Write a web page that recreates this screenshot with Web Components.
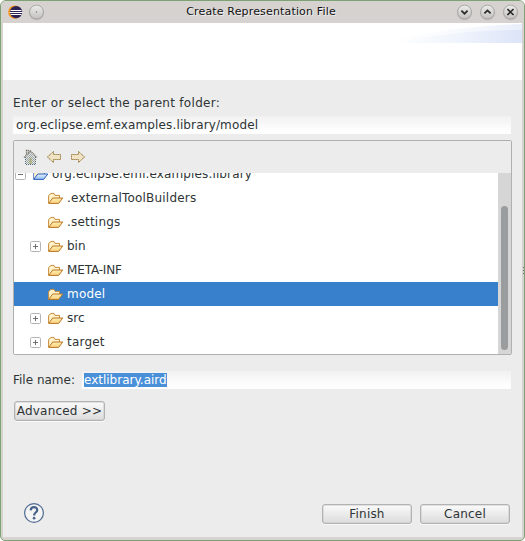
<!DOCTYPE html>
<html lang="en"><head><meta charset="utf-8"><title>Create Representation File</title>
<style>
html,body{margin:0;width:525px;height:541px;overflow:hidden;background:#fff}
body{font:12px/16px "DejaVu Sans",sans-serif;color:#2e3436}
</style></head><body>
<wizard-dialog></wizard-dialog>
<script>
const define=(name,html,setup)=>customElements.define(name,class extends HTMLElement{
  connectedCallback(){
    if(this.shadowRoot)return;
    const t=document.createElement('template');
    t.innerHTML=html;
    this.attachShadow({mode:'open'}).append(t.content.cloneNode(true));
    if(setup)setup(this,this.shadowRoot);
  }
});

define('window-button',`<style>:host{display:block;width:17px;height:17px}svg{display:block}</style>
<svg width="17" height="17" viewBox="0 0 17 17"><defs><linearGradient id="g" x2="0" y2="1"><stop stop-color="#ececea"/><stop offset="1" stop-color="#c3c1be"/></linearGradient></defs>
<circle cx="8.5" cy="8.9" r="7.6" fill="#b3b0ad" opacity=".6"/><circle cx="8.5" cy="8" r="6.9" fill="url(#g)" stroke="#a09d9a" stroke-width=".8"/><path fill="none" stroke="#292929" stroke-width="1.7"/></svg>`,
(h,r)=>{const p={down:'M5.4 6.7 8.5 9.7 11.6 6.7',up:'M5.4 9.4 8.5 6.4 11.6 9.4',close:'M5.4 5 11.6 11M11.6 5 5.4 11',dot:'M8 8h1'}[h.getAttribute('kind')];
const e=r.querySelector('path');e.setAttribute('d',p);if(h.getAttribute('kind')=='dot'){e.setAttribute('stroke-width','1');e.setAttribute('stroke','#555')}});

define('eclipse-logo',`<style>:host{display:block;width:15px;height:15px}svg{display:block}</style>
<svg width="15" height="15" viewBox="0 0 15 15"><circle cx="6.8" cy="7.1" r="6.7" fill="#f7941e"/><circle cx="8.1" cy="7.1" r="6.2" fill="#2c2255"/><path d="M2.5 5.5h11M1.6 7.5h13M2.5 9.5h11" stroke="#fff" stroke-width="1"/></svg>`);

define('title-bar',`<style>:host{display:flex;height:22px;background:#d6d2d0;align-items:flex-start;padding:3px 5px 0 7px;box-sizing:border-box}
eclipse-logo{margin:1px 5px 0 0}.t{flex:1;text-align:center;font-size:11px;line-height:15px;color:#111;letter-spacing:.16px;text-shadow:1px 1px 0 #eee;padding-left:21px}
.b{display:flex;gap:6px}</style>
<eclipse-logo></eclipse-logo><window-button kind="dot"></window-button><span class="t"><slot></slot></span><span class="b"><window-button kind="down"></window-button><window-button kind="up"></window-button><window-button kind="close"></window-button></span>`);

define('wizard-banner',`<style>:host{display:flex;justify-content:flex-end;height:57px;background:#fff}svg{display:block}</style>
<svg width="150" height="20" viewBox="0 0 150 20"><defs><linearGradient id="a"><stop stop-color="#fff"/><stop offset=".5" stop-color="#f0f4fc"/><stop offset="1" stop-color="#dce4f8"/></linearGradient><linearGradient id="b"><stop stop-color="#fff" stop-opacity="0"/><stop offset="1" stop-color="#e8eefa"/></linearGradient></defs>
<path d="M0 20C55 10 90 3 150 1V20Z" fill="url(#b)"/><path d="M20 20C65 11 105 7 150 7V20Z" fill="url(#a)"/></svg>`);

define('text-field',`<style>:host{display:block;height:18px;line-height:18px;background:linear-gradient(#f1f1f1,#fefefe 80%);padding-left:2px;box-sizing:border-box;white-space:nowrap}</style><slot></slot>`);

define('push-button',`<style>:host{display:block;box-sizing:border-box;height:20px;line-height:18px;letter-spacing:.2px;border:1px solid #b2b2b2;border-radius:3px;background:linear-gradient(#fafafa,#dcdcdc);text-align:center;white-space:nowrap;box-shadow:0 1px 0 #f9f9f9,inset 0 0 0 .5px #c8c8c8}</style><slot></slot>`);

define('folder-icon',`<style>:host{display:block;width:16px;height:16px}svg{display:block}
.back{fill:#fff1c8;stroke:var(--folder-back,#c98c3c)}.front{stroke:var(--folder-edge,#b87622)}
.s0{stop-color:var(--folder-light,#fff0b8)}.s1{stop-color:var(--folder-dark,#f8cf78)}</style>
<svg width="16" height="16" viewBox="0 0 16 16"><defs><linearGradient id="g" x2="0" y2="1"><stop class="s0"/><stop class="s1" offset="1"/></linearGradient></defs>
<path class="back" d="M.6 13.4V5.8L2.8 3.4H6L7 5.4H11.5V8"/><path class="front" d="M.8 13.4 4.7 8H14.8L10.6 13.4Z" fill="url(#g)" stroke-linejoin="round"/></svg>`);

define('tree-row',`<style>:host{display:grid;grid-template-columns:11px 16px 1fr;column-gap:7px;align-items:center;height:24px;flex:none;box-sizing:border-box;padding-left:16px}
:host([project]){padding-left:1px;letter-spacing:.13px;--folder-back:#5f87c8;--folder-edge:#2f5bb8;--folder-light:#e7f4ff;--folder-dark:#8dbcf5}
:host([selected]){background:#3880cc;color:#fff}
.x{width:11px;height:11px;margin-top:1px}.x svg{display:block}.l{line-height:24px;white-space:nowrap;margin-left:-4px}</style>
<span class="x"></span><folder-icon></folder-icon><span class="l"><slot></slot></span>`,
(h,r)=>{const e=h.getAttribute('expander');
if(e)r.querySelector('.x').innerHTML='<svg width="11" height="11" viewBox="0 0 11 11"><rect x=".5" y=".5" width="10" height="10" rx="1.2" fill="#fff" stroke="#b5b5b5"/><path d="M3 5.5h5'+(e=='plus'?'M5.5 3v5':'')+'" stroke="#6d706d"/></svg>'});

define('nav-toolbar',`<style>:host{display:flex;height:32px;flex:none;padding:8px 0 0 9px;gap:8px;box-sizing:border-box;background:#ececec}svg{display:block}.ar{margin-left:-1px;margin-right:1px}</style>
<svg width="16" height="16" viewBox="0 0 16 16"><defs><pattern id="p" width="2" height="2" patternUnits="userSpaceOnUse"><path d="M0 0h1v1H0zM1 1h1v1H1z" fill="#777e80"/></pattern></defs>
<path d="M2.5 8 7.5 3 12.5 8V15.5H2.5Z" fill="#dfe3e1"/><path d="M3 8 7.5 3 12 8V15H3Z" fill="url(#p)" opacity=".6"/><path d="M1 8.5 7.5 2 14 8.5M3.5 5.5V1.5H5.5V3.5" fill="none" stroke="#77736b" stroke-width="1.3" stroke-dasharray="1.2 .6"/><path d="M2.5 8V15.5H12.5V8" fill="none" stroke="#566a80" stroke-dasharray="1 1"/><path d="M6.5 9H8.5V15H6.5Z" fill="#a3a862" opacity=".75"/></svg>
<svg class="ar" width="16" height="16" viewBox="0 0 16 16"><path d="M1.5 8 7.5 2.5V5.5H14.5V10.5H7.5V13.5Z" fill="#efe3c4" stroke="#d8c8a0"/><path d="M1.5 8 7.5 2.5V5.5H14.5V10.5H7.5V13.5Z" fill="none" stroke="#8c7038" stroke-dasharray="1 1"/></svg>
<svg class="ar" width="16" height="16" viewBox="0 0 16 16"><path d="M14.5 8 8.5 2.5V5.5H1.5V10.5H8.5V13.5Z" fill="#efe3c4" stroke="#d8c8a0"/><path d="M14.5 8 8.5 2.5V5.5H1.5V10.5H8.5V13.5Z" fill="none" stroke="#8c7038" stroke-dasharray="1 1"/></svg>`);

define('scroll-bar',`<style>:host{display:block;width:13px;box-sizing:border-box;background:#d6d6d6;padding:33px 3px 4px}i{display:block;height:100%;border-radius:4px;background:#9a9c9d;width:7px}</style><i></i>`);

define('folder-tree',`<style>:host{display:flex;flex-direction:column;height:215px;box-sizing:border-box;border:1px solid #b0b0b0;border-radius:2px;overflow:hidden}
.v{display:flex;flex:1;min-height:0}.r{flex:1;background:#fff;overflow:hidden;display:flex;flex-direction:column;justify-content:flex-end}</style>
<nav-toolbar></nav-toolbar><div class="v"><div class="r"><slot></slot></div><scroll-bar></scroll-bar></div>`);

define('help-icon',`<style>:host{display:block;width:22px;height:22px}svg{display:block}</style>
<svg width="22" height="22" viewBox="0 0 22 22"><circle cx="11" cy="11" r="9.4" fill="#f4f4f5" stroke="#506a91" stroke-width="1.2"/><path d="M7.7 8.4C7.8 4.1 14.4 4.3 14.2 8.1 14.1 10.6 11.1 10.5 11.1 13.4" fill="none" stroke="#49638b" stroke-width="2.2"/><circle cx="11.1" cy="16.2" r="1.35" fill="#49638b"/></svg>`);

define('wizard-dialog',`<style>
:host{display:flex;flex-direction:column;box-sizing:border-box;width:525px;height:541px;border:1px solid #7da273;border-radius:6px 6px 5px 5px;background:#d6d2d0;overflow:hidden;position:relative}
.body{margin:0 2px 3px;flex:1;background:#ececec;display:flex;flex-direction:column}
.form{padding:15px 10px 0 10px;display:flex;flex-direction:column}
.label{line-height:16px;white-space:nowrap;letter-spacing:.3px}
.path{margin:5px 1px 6px 0;padding-left:3px;letter-spacing:.13px}
.name{display:flex;align-items:center;margin:16px 1px 12px 0}
.name text-field{flex:1;margin-left:7px}
.sel{display:inline-block;height:14px;line-height:14px;background:#4a90d9;color:#fff;vertical-align:middle;margin-top:-2px}
.adv{align-self:flex-start;width:91px;margin-left:1px}
.footer{margin-top:auto;display:flex;align-items:center;padding:0 12px 13px 20px;gap:8px}
.footer push-button{width:90px;margin-top:2px}.grow{flex:1}
.grip{position:absolute;right:0;top:266px;width:1px;height:8px;background:repeating-linear-gradient(#666 0 1px,#d6d2d0 1px 3px)}
.wide{letter-spacing:.2px}
</style>
<title-bar>Create Representation File</title-bar>
<div class="body"><wizard-banner></wizard-banner>
<div class="form"><span class="label">Enter or select the parent folder:</span>
<text-field class="path">org.eclipse.emf.examples.library/model</text-field>
<folder-tree>
<tree-row project expander="minus">org.eclipse.emf.examples.library</tree-row>
<tree-row class="wide">.externalToolBuilders</tree-row><tree-row class="wide">.settings</tree-row><tree-row expander="plus">bin</tree-row><tree-row style="letter-spacing:-.15px">META-INF</tree-row><tree-row selected class="wide">model</tree-row><tree-row expander="plus">src</tree-row><tree-row expander="plus" class="wide">target</tree-row>
</folder-tree>
<div class="name"><span>File name:</span><text-field><span class="sel">extlibrary.aird</span></text-field></div>
<push-button class="adv">Advanced &gt;&gt;</push-button></div>
<div class="footer"><help-icon></help-icon><span class="grow"></span><push-button>Finish</push-button><push-button>Cancel</push-button></div></div>
<div class="grip"></div>`);
</script></body></html>
